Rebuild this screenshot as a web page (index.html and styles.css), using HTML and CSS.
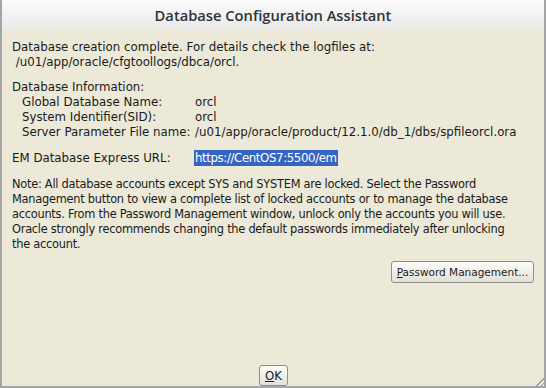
FILE: index.html
```html
<!DOCTYPE html>
<html lang="en">
<head>
  <meta charset="UTF-8">
  <title>Database Configuration Assistant</title>
  <link rel="stylesheet" href="styles.css">
</head>
<body>
  <div class="window">
    <div class="titlebar">Database Configuration Assistant</div>
    <div class="content">
      <p class="msg">Database creation complete. For details check the logfiles at:<br>&nbsp;/u01/app/oracle/cfgtoollogs/dbca/orcl.</p>

      <div class="info">
        <div class="info-title">Database Information:</div>
        <div class="info-grid">
          <span>Global Database Name:</span><span>orcl</span>
          <span>System Identifier(SID):</span><span>orcl</span>
          <span>Server Parameter File name:</span><span>/u01/app/oracle/product/12.1.0/db_1/dbs/spfileorcl.ora</span>
        </div>
      </div>

      <div class="em-row">
        <span class="em-label">EM Database Express URL:</span>
        <span class="url">https://CentOS7:5500/em</span>
      </div>

      <p class="note">Note: All database accounts except SYS and SYSTEM are locked. Select the Password<br>Management button to view a complete list of locked accounts or to manage the database<br>accounts. From the Password Management window, unlock only the accounts you will use.<br>Oracle strongly recommends changing the default passwords immediately after unlocking<br>the account.</p>

      <div class="actions">
        <button class="btn btn-pw"><u>P</u>assword Management...</button>
      </div>

      <div class="footer">
        <button class="btn btn-ok"><u>O</u>K</button>
      </div>
    </div>
    <div class="grip"></div>
  </div>
</body>
</html>
```

FILE: styles.css
```css
html, body {
  margin: 0;
  padding: 0;
}
body {
  font-family: "DejaVu Sans", sans-serif;
  font-size: 11.8px;
  color: #1a1a1a;
  background: #ece9d8;
}
.window {
  position: relative;
  width: 546px;
  height: 388px;
  box-sizing: border-box;
  display: flex;
  flex-direction: column;
  border: 2px solid #a5a5a5;
  border-top: none;
  background: #ece9d8;
}
.titlebar {
  height: 30px;
  flex: none;
  display: flex;
  align-items: center;
  justify-content: center;
  background: linear-gradient(#fbfbfb, #e9e9e9);
  font-family: "Open Sans", sans-serif;
  font-weight: 600;
  font-size: 14.7px;
  color: #2e3436;
}
.content {
  flex: 1;
  display: flex;
  flex-direction: column;
  padding: 10px 9px 0 10px;
  line-height: 15px;
}
.msg {
  margin: 0 0 10px;
}
.info-title {
  margin: 0;
}
.info-grid {
  display: grid;
  grid-template-columns: 173px auto;
  padding-left: 10px;
}
.em-row {
  display: flex;
  margin-top: 10px;
  line-height: 16px;
}
.em-label {
  width: 182px;
}
.url {
  background: #3465c0;
  color: #fff;
  padding: 0 1px;
  letter-spacing: -0.4px;
}
.note {
  margin: 11px 0 0;
  font-size: 11.4px;
  letter-spacing: -0.26px;
  white-space: nowrap;
}
.actions {
  display: flex;
  justify-content: flex-end;
  margin-top: 9px;
}
.btn {
  font-family: "DejaVu Sans", sans-serif;
  font-size: 11.8px;
  color: #1a1a1a;
  height: 22px;
  padding: 0 4px;
  border: 1px solid #8e8e8e;
  border-radius: 3px;
  background: linear-gradient(#fdfdfa, #e3e1d5);
  white-space: nowrap;
}
.btn-pw {
  width: 143px;
  margin-right: 1px;
  font-size: 10.5px;
}
.footer {
  margin-top: auto;
  display: flex;
  justify-content: center;
}
.btn-ok {
  height: 21px;
  padding: 0 5px;
}
.grip {
  position: absolute;
  right: 0;
  bottom: 0;
  width: 9px;
  height: 9px;
  background: repeating-linear-gradient(135deg, transparent 0 1px, #9a9a9a 1px 2px, transparent 2px 3px);
  clip-path: polygon(100% 0, 100% 100%, 0 100%);
}
```
